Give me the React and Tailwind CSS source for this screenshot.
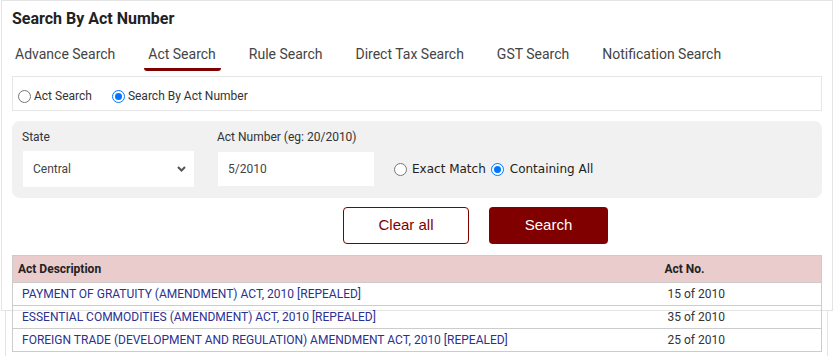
import { useState } from "react";

const tabs = ["Advance Search", "Act Search", "Rule Search", "Direct Tax Search", "GST Search", "Notification Search"];

const rows = [
  { desc: "PAYMENT OF GRATUITY (AMENDMENT) ACT, 2010 [REPEALED]", no: "15 of 2010" },
  { desc: "ESSENTIAL COMMODITIES (AMENDMENT) ACT, 2010 [REPEALED]", no: "35 of 2010" },
  { desc: "FOREIGN TRADE (DEVELOPMENT AND REGULATION) AMENDMENT ACT, 2010 [REPEALED]", no: "25 of 2010" },
];

function Radio({ checked }) {
  return (
    <span
      className={
        "inline-flex items-center justify-center w-[13px] h-[13px] rounded-full border shrink-0 bg-white " +
        (checked ? "border-[#0075ff]" : "border-[#767676]")
      }
    >
      {checked && <span className="w-[7px] h-[7px] rounded-full bg-[#0075ff]" />}
    </span>
  );
}

export default function App() {
  const [active] = useState(1);

  return (
    <div className="min-h-[356px] bg-white font-['Roboto',sans-serif] text-[#333]">
      <div className="ml-[5px] mr-[6px] min-h-[356px] border-x border-[#e4e4e4]">
        <div className="-ml-[5px] -mr-[6px] h-[311px] border border-[#e4e4e4] bg-white px-[10px]">
          <h1 className="pt-[8px] text-[16px] font-bold text-[#222] leading-[20px]">Search By Act Number</h1>

          {/* tabs */}
          <div className="flex mt-[14px] pl-[3px] gap-[33px]">
            {tabs.map((t, i) => (
              <div key={t} className="relative h-[33px] pt-[2px] text-[14px] leading-[18px] text-[#444]">
                {t}
                {i === active && (
                  <span className="absolute left-[-4px] right-[-5px] top-[25px] h-[3px] rounded-b-[3px] bg-[#800000]" />
                )}
              </div>
            ))}
          </div>

          {/* mode radios */}
          <div className="flex items-center h-[35px] border border-[#e6e6e6] px-[5px] pt-[5px] text-[12px]">
            <label className="flex items-center gap-[3px]">
              <Radio checked={false} />
              Act Search
            </label>
            <label className="flex items-center gap-[3px] ml-[20px]">
              <Radio checked />
              Search By Act Number
            </label>
          </div>

          {/* filter panel */}
          <div className="mt-[10px] h-[77px] rounded-[8px] bg-[#f1f1f1] pl-[10px] pt-[8px] flex text-[12px]">
            <div className="w-[172px]">
              <div className="leading-[17px]">State</div>
              <div className="mt-[5px] ml-[1px] h-[36px] bg-white flex items-center justify-between pl-[10px] pr-[6px] text-[#444]">
                Central
                <svg width="9" height="6" viewBox="0 0 9 6" className="mr-[2px]">
                  <path d="M1 1l3.5 3.5L8 1" fill="none" stroke="#555" strokeWidth="2" />
                </svg>
              </div>
            </div>
            <div className="ml-[23px] w-[157px]">
              <div className="leading-[17px]">Act Number (eg: 20/2010)</div>
              <div className="mt-[6px] ml-[1px] h-[34px] bg-white flex items-center pl-[10px] text-[#444]">5/2010</div>
            </div>
            <div className="ml-[20px] mt-[30px] flex items-center h-[20px] font-['DejaVu_Sans',sans-serif] text-[12px] text-[#222]">
              <Radio checked={false} />
              <span className="ml-[5px]">Exact Match</span>
              <span className="ml-[5px]"><Radio checked /></span>
              <span className="ml-[6px]">Containing All</span>
            </div>
          </div>

          {/* buttons */}
          <div className="flex mt-[9px] pl-[331px] gap-[20px] font-['Liberation_Sans',sans-serif] text-[15px]">
            <button className="w-[126px] h-[37px] rounded-[4px] border border-[#800000] bg-white text-[#800000]">Clear all</button>
            <button className="w-[119px] h-[37px] rounded-[4px] bg-[#800000] text-white">Search</button>
          </div>

          {/* results */}
          <table className="mt-[11px] w-[810px] border-collapse border border-[#cccccc] text-[12px]">
            <thead>
              <tr className="bg-[#ebcccc] h-[27px]">
                <th className="text-left font-bold pl-[5px] text-[#222]">Act Description</th>
                <th className="text-left font-bold w-[157px] pl-0 text-[#222]">Act No.</th>
              </tr>
            </thead>
            <tbody>
              {rows.map((r) => (
                <tr key={r.no} className="h-[23px] border-t border-[#cccccc]">
                  <td className="pl-[9px] text-[#2b3190]">{r.desc}</td>
                  <td className="pl-[3px] text-[#333]">{r.no}</td>
                </tr>
              ))}
            </tbody>
          </table>
        </div>
      </div>
    </div>
  );
}
